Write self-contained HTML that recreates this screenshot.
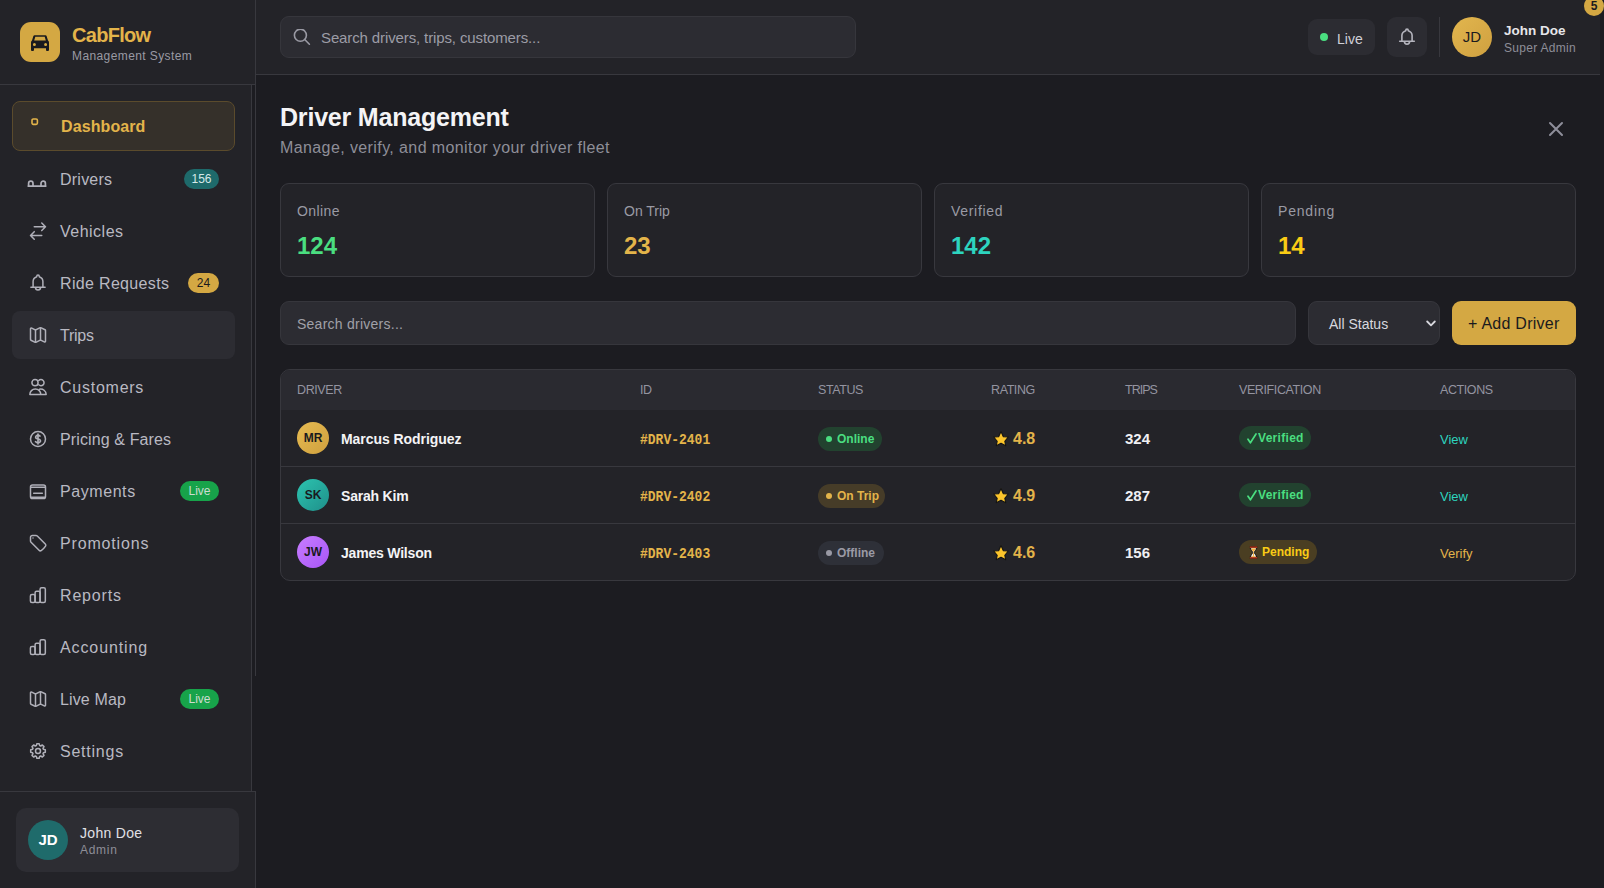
<!DOCTYPE html>
<html>
<head>
<meta charset="utf-8">
<style>
*{box-sizing:border-box;margin:0;padding:0}
html,body{width:1604px;height:888px;overflow:hidden;background:#1c1c21;font-family:"Liberation Sans",sans-serif;color:#e8e8ec}
.abs{position:absolute}
/* sidebar */
#sb{position:absolute;left:0;top:0;width:256px;height:888px}
#sb-logo{position:absolute;left:0;top:0;width:255px;height:85px;background:#232328;border-bottom:1px solid #38383e}
#sb-nav{position:absolute;left:0;top:85px;width:251px;height:706px;background:#232328}
#sb-foot{position:absolute;left:0;top:791px;width:255px;height:97px;background:#232328;border-top:1px solid #38383e}
.vline{position:absolute;width:1px;background:#38383e}
.logo-box{position:absolute;left:20px;top:22px;width:40px;height:40px;border-radius:11px;background:#d4a843}
.brand{position:absolute;left:72px;top:24px;font-size:20px;font-weight:700;color:#e3b44a;letter-spacing:-0.7px;line-height:22px}
.brand-sub{position:absolute;left:72px;top:49px;font-size:12px;color:#9a9aa4;letter-spacing:0.4px;line-height:14px}
.nav-item{position:absolute;left:12px;width:223px;height:48px;border-radius:8px}
.nav-item .lbl{position:absolute;left:48px;top:1px;line-height:48px;font-size:16px;color:#b9b9c2}
.nav-item svg{position:absolute;left:16px;top:14px;width:20px;height:20px;fill:none;stroke:#b0b0b9;stroke-width:1.8;stroke-linecap:round;stroke-linejoin:round}
.nav-active{background:#35302a;border:1px solid #5b4b2c;height:50px}
.nav-active .lbl{color:#e3b44a;left:48px;top:1px;line-height:48px;font-size:16px;font-weight:700;letter-spacing:0.1px}
.nav-hover{background:#2c2c32}
.badge{position:absolute;top:14px;height:20px;border-radius:10px;font-size:12px;line-height:20px;text-align:center}
/* header */
#hdr{position:absolute;left:256px;top:0;width:1344px;height:75px;background:#232328;border-bottom:1px solid #38383e}
.search-top{position:absolute;left:24px;top:16px;width:576px;height:42px;background:#2c2c32;border:1px solid #36363c;border-radius:9px}
/* main */
.card{position:absolute;top:183px;width:315px;height:94px;background:#232328;border:1px solid #38383e;border-radius:9px}
.card .t{position:absolute;left:16px;top:18px;font-size:14px;color:#9a9aa4;line-height:18px}
.card .v{position:absolute;left:16px;top:47.5px;font-size:24px;font-weight:700;line-height:28px}

.th{position:absolute;top:381.5px;font-size:12.5px;line-height:16px;color:#9494a0;letter-spacing:-0.4px}
.av{position:absolute;left:297px;width:32px;height:32px;border-radius:50%;color:#1a1a1e;font-size:12px;font-weight:700;line-height:32px;text-align:center}
.nm{position:absolute;left:341px;margin-top:0.5px;letter-spacing:-0.2px;font-size:14px;font-weight:700;line-height:20px;color:#f4f4f6}
.idc{position:absolute;left:640px;margin-top:3px;font-family:"Liberation Mono",monospace;font-size:13px;font-weight:700;line-height:18px;color:#e3b44a;transform:scaleY(1.15);transform-origin:0 70%}
.pill{position:absolute;height:24px;border-radius:12px;font-size:12px;font-weight:700;line-height:24px;padding-left:8px;white-space:nowrap}
.dot{display:inline-block;width:6px;height:6px;border-radius:50%;margin-right:5px;vertical-align:1px}
.star{position:absolute;left:990.5px;width:20px;height:20px}
.rt{position:absolute;left:1013px;margin-top:1px;font-size:16px;font-weight:700;line-height:20px;color:#e3b44a;letter-spacing:0px}
.tp{position:absolute;left:1125px;margin-top:0.5px;font-size:15px;font-weight:700;line-height:20px;color:#f0f0f3;letter-spacing:0px}
.act{position:absolute;left:1440px;margin-top:2px;font-size:13px;line-height:18px}
</style>
</head>
<body>
<!-- SIDEBAR -->
<div id="sb-logo">
  <div class="logo-box">
    <svg class="abs" style="left:11px;top:13px" width="18" height="16" viewBox="0 0 18 16"><path fill="#1a1a1e" fill-rule="evenodd" d="M3.6 0.2H14.4C15 0.2 15.4 0.5 15.6 1L17 5.6C17.6 6 18 6.6 18 7.4V15C18 15.5 17.6 15.9 17.1 15.9H15.9C15.4 15.9 15 15.5 15 15V13.2H3V15C3 15.5 2.6 15.9 2.1 15.9H0.9C0.4 15.9 0 15.5 0 15V7.4C0 6.6 0.4 6 1 5.6L2.4 1C2.6 0.5 3 0.2 3.6 0.2ZM4.3 1.8L3.2 5.5H14.8L13.7 1.8ZM3.4 8A1.5 1.5 0 1 0 3.4 11A1.5 1.5 0 1 0 3.4 8ZM14.6 8A1.5 1.5 0 1 0 14.6 11A1.5 1.5 0 1 0 14.6 8Z"/></svg>
  </div>
  <div class="brand">CabFlow</div>
  <div class="brand-sub">Management System</div>
</div>
<div id="sb-nav"></div>
<div class="nav-item nav-active" style="top:101px">
  <svg style="left:18px;top:16px;width:8px;height:8px" viewBox="0 0 8 8"><rect x="1" y="1" width="5.4" height="5.4" rx="1.3" stroke="#e3b44a" stroke-width="1.6"/></svg>
  <div class="lbl">Dashboard</div>
</div>
<div class="nav-item" style="top:155px">
  <svg style="left:15px;top:24px;width:20px;height:9px" viewBox="0 0 20 9"><path d="M1.6 7V4.4a2.2 2.2 0 0 1 4.4 0V7M14 7V4.4a2.2 2.2 0 0 1 4.4 0V7M1.2 7.1H18.8" stroke-width="1.7"/></svg>
  <div class="lbl" style="letter-spacing:0.23px">Drivers</div>
  <div class="badge" style="left:172px;width:35px;background:#1e6a6b;color:#d6e9e9">156</div>
</div>
<div class="nav-item" style="top:207px">
  <svg viewBox="0 0 24 24"><path d="M7.5 21.8L3 17.3l4.5-4.5M3 17.3h13.5M16.5 2.5L21 7l-4.5 4.5M21 7H7.5"/></svg>
  <div class="lbl" style="letter-spacing:0.49px">Vehicles</div>
</div>
<div class="nav-item" style="top:259px">
  <svg viewBox="0 0 20 20"><path d="M5.1 13.6V8.6C5.1 6 6.7 4.4 8.7 3.7C8.7 2.7 9.2 2.1 10 2.1C10.8 2.1 11.3 2.7 11.3 3.7C13.3 4.4 14.9 6 14.9 8.6V13.6M2.9 14.2H17.1M7.5 14.6A2.5 2.5 0 0 0 12.5 14.6" stroke-width="1.5"/></svg>
  <div class="lbl" style="letter-spacing:0.33px">Ride Requests</div>
  <div class="badge" style="left:176px;width:31px;background:#d4a843;color:#1a1a1e">24</div>
</div>
<div class="nav-item nav-hover" style="top:311px">
  <svg viewBox="0 0 24 24"><g transform="translate(24 0) scale(-1 1)"><path d="M14.106 5.553a2 2 0 0 0 1.788 0l3.659-1.83A1 1 0 0 1 21 4.619v12.764a1 1 0 0 1-.553.894l-4.553 2.277a2 2 0 0 1-1.788 0l-4.212-2.106a2 2 0 0 0-1.788 0l-3.659 1.83A1 1 0 0 1 3 19.381V6.618a1 1 0 0 1 .553-.894l4.553-2.277a2 2 0 0 1 1.788 0z"/><path d="M15 5.764v15M9 3.236v15"/></g></svg>
  <div class="lbl" style="letter-spacing:-0.25px">Trips</div>
</div>
<div class="nav-item" style="top:363px">
  <svg viewBox="0 0 24 24"><circle cx="8.4" cy="6.8" r="3.7"/><path d="M12.9 4.2a3.7 3.7 0 1 1 0 5.2"/><path d="M2.2 21a6.6 6.6 0 0 1 13.2 0zM13.8 14.6a6.6 6.6 0 0 1 8 6.4h-6.4"/></svg>
  <div class="lbl" style="letter-spacing:0.75px">Customers</div>
</div>
<div class="nav-item" style="top:415px">
  <svg viewBox="0 0 24 24"><circle cx="12" cy="12" r="9"/><path d="M12 6v12m-3-2.818l.879.659c1.171.879 3.07.879 4.242 0 1.172-.879 1.172-2.303 0-3.182C13.536 12.219 12.768 12 12 12c-.725 0-1.45-.22-2.003-.659-1.106-.879-1.106-2.303 0-3.182s2.9-.879 4.006 0l.415.33" stroke-width="2"/></svg>
  <div class="lbl" style="letter-spacing:0.12px">Pricing &amp; Fares</div>
</div>
<div class="nav-item" style="top:467px">
  <svg viewBox="0 0 24 24"><rect x="3" y="4.8" width="18" height="16.2" rx="2.5"/><path d="M3.5 7.4h17M6.8 14.6h10.4M4 19.4h16" stroke-width="1.8"/></svg>
  <div class="lbl" style="letter-spacing:0.57px">Payments</div>
  <div class="badge" style="left:168px;width:39px;background:#17a34a;color:#cddbd0">Live</div>
</div>
<div class="nav-item" style="top:519px">
  <svg viewBox="0 0 24 24"><path d="M9.568 3H5.25A2.25 2.25 0 003 5.25v4.318c0 .597.237 1.17.659 1.591l9.581 9.581c.699.699 1.78.872 2.607.33a18.095 18.095 0 005.223-5.223c.542-.827.369-1.908-.33-2.607L11.16 3.66A2.25 2.25 0 009.568 3z"/><path d="M6 6h.008v.008H6V6z"/></svg>
  <div class="lbl" style="letter-spacing:0.84px">Promotions</div>
</div>
<div class="nav-item" style="top:571px">
  <svg viewBox="0 0 24 24"><rect x="2.9" y="11.3" width="5.6" height="9.8" rx="1.8"/><rect x="8.5" y="7.6" width="6" height="13.5" rx="1.8"/><rect x="14.5" y="3.2" width="6.3" height="17.9" rx="1.8"/></svg>
  <div class="lbl" style="letter-spacing:0.83px">Reports</div>
</div>
<div class="nav-item" style="top:623px">
  <svg viewBox="0 0 24 24"><rect x="2.9" y="11.3" width="5.6" height="9.8" rx="1.8"/><rect x="8.5" y="7.6" width="6" height="13.5" rx="1.8"/><rect x="14.5" y="3.2" width="6.3" height="17.9" rx="1.8"/></svg>
  <div class="lbl" style="letter-spacing:0.89px">Accounting</div>
</div>
<div class="nav-item" style="top:675px">
  <svg viewBox="0 0 24 24"><g transform="translate(24 0) scale(-1 1)"><path d="M14.106 5.553a2 2 0 0 0 1.788 0l3.659-1.83A1 1 0 0 1 21 4.619v12.764a1 1 0 0 1-.553.894l-4.553 2.277a2 2 0 0 1-1.788 0l-4.212-2.106a2 2 0 0 0-1.788 0l-3.659 1.83A1 1 0 0 1 3 19.381V6.618a1 1 0 0 1 .553-.894l4.553-2.277a2 2 0 0 1 1.788 0z"/><path d="M15 5.764v15M9 3.236v15"/></g></svg>
  <div class="lbl" style="letter-spacing:0.14px">Live Map</div>
  <div class="badge" style="left:168px;width:39px;background:#17a34a;color:#cddbd0">Live</div>
</div>
<div class="nav-item" style="top:727px">
  <svg viewBox="0 0 24 24"><path d="M10.01 5.50L10.61 3.21L13.39 3.21L13.99 5.50A6.8 6.8 0 0 1 15.19 6.00L17.23 4.80L19.20 6.77L18.00 8.81A6.8 6.8 0 0 1 18.50 10.01L20.79 10.61L20.79 13.39L18.50 13.99A6.8 6.8 0 0 1 18.00 15.19L19.20 17.23L17.23 19.20L15.19 18.00A6.8 6.8 0 0 1 13.99 18.50L13.39 20.79L10.61 20.79L10.01 18.50A6.8 6.8 0 0 1 8.81 18.00L6.77 19.20L4.80 17.23L6.00 15.19A6.8 6.8 0 0 1 5.50 13.99L3.21 13.39L3.21 10.61L5.50 10.01A6.8 6.8 0 0 1 6.00 8.81L4.80 6.77L6.77 4.80L8.81 6.00A6.8 6.8 0 0 1 10.01 5.50Z"/><circle cx="12" cy="12" r="3"/></svg>
  <div class="lbl" style="letter-spacing:0.77px">Settings</div>
</div>
<div id="sb-foot">
  <div class="abs" style="left:16px;top:16px;width:223px;height:64px;border-radius:10px;background:#2d2d33">
    <div class="abs" style="left:12px;top:12px;width:40px;height:40px;border-radius:50%;background:#1f6b6b;color:#fff;font-weight:700;font-size:15px;line-height:40px;text-align:center">JD</div>
    <div class="abs" style="left:64px;top:17px;font-size:14px;line-height:16px;color:#e0e0e6;font-weight:400;letter-spacing:0.3px">John Doe</div>
    <div class="abs" style="left:64px;top:35px;font-size:12px;line-height:14px;color:#8e8e98;letter-spacing:0.7px">Admin</div>
  </div>
</div>
<div class="vline" style="left:255px;top:0;height:676px"></div>
<div class="vline" style="left:251px;top:85px;height:706px"></div>
<div class="vline" style="left:255px;top:791px;height:97px"></div>

<!-- HEADER -->
<div id="hdr">
  <div class="search-top">
    <svg class="abs" style="left:12px;top:12px" width="20" height="20" viewBox="0 0 20 20" fill="none" stroke="#9a9aa4" stroke-width="1.6" stroke-linecap="round"><circle cx="7.4" cy="6.2" r="6"/><path d="M11.7 10.5L16.4 15.2"/></svg>
    <div class="abs" style="left:40px;top:11px;font-size:15px;line-height:20px;color:#9c9ca6;letter-spacing:-0.12px">Search drivers, trips, customers...</div>
  </div>
  <div class="abs" style="left:1052px;top:19px;width:67px;height:36px;border-radius:9px;background:#2c2c32">
    <div class="abs" style="left:12px;top:14px;width:8px;height:8px;border-radius:50%;background:#4ade80"></div>
    <div class="abs" style="left:29px;top:10.5px;font-size:14px;line-height:18px;color:#d0d0d8">Live</div>
  </div>
  <div class="abs" style="left:1131px;top:17px;width:40px;height:40px;border-radius:9px;background:#2c2c32">
    <svg class="abs" style="left:10px;top:10px" width="20" height="20" viewBox="0 0 20 20" fill="none" stroke="#b4b4bd" stroke-width="1.6" stroke-linecap="round" stroke-linejoin="round"><path d="M4.9 13.6V8.6C4.9 6 6.6 4.4 8.7 3.7C8.7 2.7 9.2 2.1 10 2.1C10.8 2.1 11.3 2.7 11.3 3.7C13.4 4.4 15.1 6 15.1 8.6V13.6M2.7 14.2H17.3M7.4 14.6A2.6 2.6 0 0 0 12.6 14.6"/></svg>
  </div>
  <div class="abs" style="left:1183px;top:17px;width:1px;height:40px;background:#38383e"></div>
  <div class="abs" style="left:1196px;top:17px;width:40px;height:40px;border-radius:50%;background:linear-gradient(135deg,#e2b64e,#cfa040);color:#1a1a1e;font-size:15px;font-weight:400;line-height:40px;text-align:center">JD</div>
  <div class="abs" style="left:1248px;top:22.5px;font-size:13.5px;font-weight:700;line-height:16px;color:#e6e6ea;letter-spacing:0px">John Doe</div>
  <div class="abs" style="left:1248px;top:41px;font-size:12px;line-height:14px;color:#8e8e98;letter-spacing:0.3px">Super Admin</div>
</div>
<div class="abs" style="left:1600px;top:0;width:4px;height:888px;background:#1c1c21"></div>
<div class="abs" style="left:1584px;top:-4px;width:20px;height:20px;border-radius:50%;background:#d4a843;color:#1a1a1e;font-size:12px;font-weight:700;line-height:20px;text-align:center;padding-left:0">5</div>

<!-- MAIN -->
<div class="abs" style="left:280px;top:102.5px;font-size:25px;font-weight:700;line-height:28px;color:#f4f4f6;letter-spacing:-0.2px">Driver Management</div>
<div class="abs" style="left:280px;top:138px;font-size:16px;line-height:20px;color:#8e8e98;letter-spacing:0.4px">Manage, verify, and monitor your driver fleet</div>
<svg class="abs" style="left:1544px;top:117px" width="24" height="24" viewBox="0 0 24 24" fill="none" stroke="#8e8e9a" stroke-width="2" stroke-linecap="round"><path d="M18 6L6 18M6 6l12 12"/></svg>

<div class="card" style="left:280px"><div class="t" style="letter-spacing:0.4px">Online</div><div class="v" style="color:#4ade80">124</div></div>
<div class="card" style="left:607px"><div class="t">On Trip</div><div class="v" style="color:#e3b44a">23</div></div>
<div class="card" style="left:934px"><div class="t" style="letter-spacing:0.7px">Verified</div><div class="v" style="color:#2dd4bf">142</div></div>
<div class="card" style="left:1261px"><div class="t" style="letter-spacing:0.8px">Pending</div><div class="v" style="color:#facc15">14</div></div>

<div class="abs" style="left:280px;top:301px;width:1016px;height:44px;background:#2c2c32;border:1px solid #36363c;border-radius:9px">
  <div class="abs" style="left:16px;top:12.5px;font-size:14px;line-height:18px;color:#a0a0a8;letter-spacing:0.25px">Search drivers...</div>
</div>
<div class="abs" style="left:1308px;top:301px;width:132px;height:44px;background:#2c2c32;border:1px solid #36363c;border-radius:9px">
  <div class="abs" style="left:20px;top:13px;font-size:14px;line-height:18px;color:#d8d8de">All Status</div>
  <svg class="abs" style="left:117px;top:18px" width="10" height="7" viewBox="0 0 10 7" fill="none" stroke="#d8d8de" stroke-width="1.8" stroke-linecap="round" stroke-linejoin="round"><path d="M1.2 1.5L5 5.3l3.8-3.8"/></svg>
</div>
<div class="abs" style="left:1452px;top:301px;width:124px;height:44px;background:#d4a843;border-radius:9px">
  <div class="abs" style="left:16px;top:13px;font-size:16px;line-height:20px;color:#1a1a1e;letter-spacing:0.25px">+ Add Driver</div>
</div>

<!-- TABLE -->
<div id="tbl" class="abs" style="left:280px;top:369px;width:1296px;height:212px;background:#232328;border:1px solid #38383e;border-radius:10px;overflow:hidden">
  <div class="abs" style="left:0;top:0;width:1294px;height:40px;background:#2a2a30"></div>
  <div class="abs" style="left:0;top:96px;width:1294px;height:1px;background:#38383e"></div>
  <div class="abs" style="left:0;top:153px;width:1294px;height:1px;background:#38383e"></div>
</div>
<div id="rows">
<div class="th" style="left:297px">DRIVER</div>
<div class="th" style="left:640px">ID</div>
<div class="th" style="left:818px">STATUS</div>
<div class="th" style="left:991px">RATING</div>
<div class="th" style="left:1125px;letter-spacing:-1px">TRIPS</div>
<div class="th" style="left:1239px">VERIFICATION</div>
<div class="th" style="left:1440px">ACTIONS</div>
<div class="av" style="top:422px;background:linear-gradient(135deg,#e6bb52,#cfa03e)">MR</div>
<div class="nm" style="top:428px;letter-spacing:-0.05px">Marcus Rodriguez</div>
<div class="idc" style="top:429px">#DRV-2401</div>
<div class="pill" style="left:818px;top:427px;width:64px;background:#22422f;color:#4ade80"><span class="dot" style="background:#4ade80"></span>Online</div>
<svg class="star" style="top:429.5px" viewBox="0 0 20 20"><path d="M10 1.5L12.35 6.76L17.3 7L13.8 11.24L14.7 15.7L10 13.3L5.3 15.7L6.2 11.24L2.7 7L7.65 6.76Z" fill="#fcc52c" stroke="#141414" stroke-width="1.1" stroke-linejoin="round"/></svg>
<div class="rt" style="top:428px">4.8</div>
<div class="tp" style="top:428px">324</div>
<div class="pill vp" style="left:1239px;top:426px;width:72px;background:#22422f;color:#4ade80"><svg style="position:absolute;left:7.5px;top:7px" width="10" height="11" viewBox="0 0 10 11" fill="none" stroke="#4ade80" stroke-width="1.7" stroke-linecap="round" stroke-linejoin="round"><path d="M1 6.2L3.4 9.8L9 1"/></svg><span style="position:absolute;left:19px;letter-spacing:0.3px">Verified</span></div>
<div class="act" style="top:429px;color:#2dd4bf">View</div>
<div class="av" style="top:479px;background:linear-gradient(135deg,#2cc4b0,#1f8f8a)">SK</div>
<div class="nm" style="top:485px">Sarah Kim</div>
<div class="idc" style="top:486px">#DRV-2402</div>
<div class="pill" style="left:818px;top:484px;width:67px;background:#463c28;color:#e3b44a"><span class="dot" style="background:#e3b44a"></span>On Trip</div>
<svg class="star" style="top:486.5px" viewBox="0 0 20 20"><path d="M10 1.5L12.35 6.76L17.3 7L13.8 11.24L14.7 15.7L10 13.3L5.3 15.7L6.2 11.24L2.7 7L7.65 6.76Z" fill="#fcc52c" stroke="#141414" stroke-width="1.1" stroke-linejoin="round"/></svg>
<div class="rt" style="top:485px">4.9</div>
<div class="tp" style="top:485px">287</div>
<div class="pill vp" style="left:1239px;top:483px;width:72px;background:#22422f;color:#4ade80"><svg style="position:absolute;left:7.5px;top:7px" width="10" height="11" viewBox="0 0 10 11" fill="none" stroke="#4ade80" stroke-width="1.7" stroke-linecap="round" stroke-linejoin="round"><path d="M1 6.2L3.4 9.8L9 1"/></svg><span style="position:absolute;left:19px;letter-spacing:0.3px">Verified</span></div>
<div class="act" style="top:486px;color:#2dd4bf">View</div>
<div class="av" style="top:536px;background:linear-gradient(135deg,#c77dff,#a855f7)">JW</div>
<div class="nm" style="top:542px">James Wilson</div>
<div class="idc" style="top:543px">#DRV-2403</div>
<div class="pill" style="left:818px;top:541px;width:66px;background:#2e3038;color:#9a9aa5"><span class="dot" style="background:#9a9aa5"></span>Offline</div>
<svg class="star" style="top:543.5px" viewBox="0 0 20 20"><path d="M10 1.5L12.35 6.76L17.3 7L13.8 11.24L14.7 15.7L10 13.3L5.3 15.7L6.2 11.24L2.7 7L7.65 6.76Z" fill="#fcc52c" stroke="#141414" stroke-width="1.1" stroke-linejoin="round"/></svg>
<div class="rt" style="top:542px">4.6</div>
<div class="tp" style="top:542px">156</div>
<div class="pill vp" style="left:1239px;top:540px;width:78px;background:#4a3e22;color:#facc15"><svg style="position:absolute;left:9.5px;top:5.5px" width="9" height="13" viewBox="0 0 9 13"><path d="M0.8 1.2h7.4M0.8 11.8h7.4" stroke="#111" stroke-width="2.6"/><path d="M1.5 1.6h6c0 2.6-2.2 3.6-2.2 4.9s2.2 2.3 2.2 4.9h-6c0-2.6 2.2-3.6 2.2-4.9S1.5 4.2 1.5 1.6z" fill="#f5f0e8" stroke="#111" stroke-width="1"/><path d="M2.3 2.4h4.4c-.3 1.6-1.6 2.6-2.2 3.6c-.6-1-1.9-2-2.2-3.6z" fill="#f6b13a"/><path d="M4.5 6.5v4.2M2.6 10.8h3.8" stroke="#f6b13a" stroke-width="0.9"/><path d="M0.8 1.1h7.4M0.8 11.9h7.4" stroke="#d9401e" stroke-width="1.4"/></svg><span style="position:absolute;left:23px">Pending</span></div>
<div class="act" style="top:543px;color:#e3b44a">Verify</div>
</div>
</body>
</html>
